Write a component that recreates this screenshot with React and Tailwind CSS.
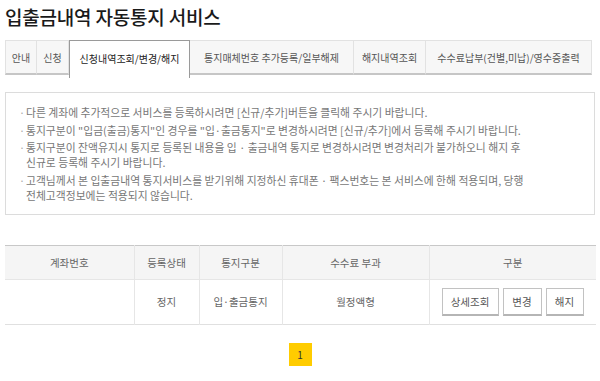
const font = { fontFamily: '"Noto Sans CJK KR", "Noto Sans", sans-serif' };

const tabs = [
  { label: "안내", w: "w-[32px]" },
  { label: "신청", w: "w-[32px]" },
  { label: "신청내역조회/변경/해지", w: "w-[121px]", active: true },
  { label: "통지매체번호 추가등록/일부해제", w: "w-[164px]" },
  { label: "해지내역조회", w: "w-[72px]" },
  { label: "수수료납부(건별,미납)/영수증출력", w: "w-[166px]" },
];

const notices = [
  ["다른 계좌에 추가적으로 서비스를 등록하시려면 [신규/추가]버튼을 클릭해 주시기 바랍니다."],
  ['통지구분이 "입금(출금)통지"인 경우를 "입·출금통지"로 변경하시려면 [신규/추가]에서 등록해 주시기 바랍니다.'],
  [
    "통지구분이 잔액유지시 통지로 등록된 내용을 입 · 출금내역 통지로 변경하시려면 변경처리가 불가하오니 해지 후",
    "신규로 등록해 주시기 바랍니다.",
  ],
  [
    "고객님께서 본 입출금내역 통지서비스를 받기위해 지정하신 휴대폰 · 팩스번호는 본 서비스에 한해 적용되며, 당행",
    "전체고객정보에는 적용되지 않습니다.",
  ],
];

const SmallButton = ({ children, className = "" }) => (
  <button
    className={`h-[28px] bg-white border border-[#c2c2c2] border-b-2 border-b-[#b5b5b5] text-[10.5px] text-[#555] ${className}`}
  >
    {children}
  </button>
);

export default function App() {
  return (
    <div className="w-[600px] h-[381px] bg-white px-[5px] overflow-hidden" style={font}>
      <h1 className="h-[40px] leading-[34px] text-[19px] font-medium text-[#1a1a1a] tracking-[-0.2px]">
        입출금내역 자동통지 서비스
      </h1>

      {/* tabs */}
      <div className="flex items-start h-[38px]">
        {tabs.map((t, i) =>
          t.active ? (
            <div
              key={t.label}
              className={`${t.w} h-[38px] shrink-0 bg-white border border-b-0 border-[#9a9a9a] flex items-center justify-center pb-[3px] text-[10px] text-[#222] whitespace-nowrap`}
            >
              {t.label}
            </div>
          ) : (
            <div
              key={t.label}
              className={`${t.w} h-[35px] shrink-0 bg-[#f7f7f7] border-t border-r border-[#e2e2e2] border-b-2 border-b-[#c6c6c6] ${
                i === 0 ? "border-l" : ""
              } flex items-center justify-center text-[10px] text-[#555] whitespace-nowrap`}
            >
              {t.label}
            </div>
          )
        )}
      </div>

      {/* notice box */}
      <div className="mt-[14px] h-[123px] w-[590px] border border-[#dcdcdc] pt-[12px] pl-[13px]">
        <ul className="flex flex-col gap-[2.5px] text-[10.8px] leading-[15px] text-[#777]">
          {notices.map((lines, i) => (
            <li key={i} className="flex">
              <span className="w-[7px] shrink-0 text-[#aaa]">·</span>
              <span className="whitespace-nowrap">
                {lines.map((l, j) => (
                  <span key={j} className="block">
                    {l}
                  </span>
                ))}
              </span>
            </li>
          ))}
        </ul>
      </div>

      {/* table */}
      <table className="mt-[30px] w-[591px] table-fixed border-collapse text-[10.5px] text-[#666]">
        <colgroup>
          <col className="w-[129px]" />
          <col className="w-[65px]" />
          <col className="w-[83px]" />
          <col className="w-[147px]" />
          <col className="w-[167px]" />
        </colgroup>
        <thead>
          <tr className="h-[34px] bg-[#f5f5f5] border-t border-[#c8c8c8] border-b border-b-[#e6e6e6]">
            <th className="font-normal">계좌번호</th>
            <th className="font-normal border-l border-[#e6e6e6]">등록상태</th>
            <th className="font-normal border-l border-[#e6e6e6]">통지구분</th>
            <th className="font-normal border-l border-[#e6e6e6]">수수료 부과</th>
            <th className="font-normal border-l border-[#e6e6e6]">구분</th>
          </tr>
        </thead>
        <tbody>
          <tr className="h-[45px] border-b border-[#e0e0e0]">
            <td></td>
            <td className="text-center border-l border-[#e6e6e6]">정지</td>
            <td className="text-center border-l border-[#e6e6e6]">입·출금통지</td>
            <td className="text-center border-l border-[#e6e6e6]">월정액형</td>
            <td className="border-l border-[#e6e6e6]">
              <div className="flex items-center gap-[4px] pl-[12px]">
                <SmallButton className="w-[57px]">상세조회</SmallButton>
                <SmallButton className="w-[39px]">변경</SmallButton>
                <SmallButton className="w-[38px]">해지</SmallButton>
              </div>
            </td>
          </tr>
        </tbody>
      </table>

      {/* pagination */}
      <div className="mt-[18px] flex justify-center">
        <span className="w-[23px] h-[23px] bg-[#ffcc00] flex items-center justify-center text-[10px] text-[#333]">
          1
        </span>
      </div>
    </div>
  );
}
